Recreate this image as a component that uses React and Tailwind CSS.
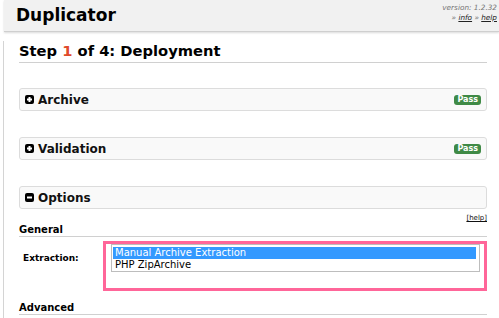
const font = { fontFamily: '"DejaVu Sans", Verdana, sans-serif' };

function Toggle({ open }) {
  return (
    <span className="inline-flex h-[9px] w-[9px] items-center justify-center rounded-[2px] bg-black">
      <svg width="7" height="7" viewBox="0 0 7 7">
        <rect x="1" y="2.5" width="5" height="2" fill="#fff" />
        {!open && <rect x="2.5" y="1" width="2" height="5" fill="#fff" />}
      </svg>
    </span>
  );
}

function Panel({ title, pass, open }) {
  return (
    <div className="flex h-[23px] items-center justify-between rounded-[3px] border border-[#dcdcdc] bg-[#f9f9f9] pl-[5px] pr-[5px]">
      <div className="flex items-center gap-[4px]">
        <Toggle open={open} />
        <span className="text-[12px] font-bold leading-[14px] text-[#111]">{title}</span>
      </div>
      {pass && (
        <span className="rounded-[3px] bg-[#3f8a46] px-[3px] py-[1px] text-[8px] font-bold leading-[8px] text-white">
          Pass
        </span>
      )}
    </div>
  );
}

export default function App() {
  return (
    <div className="h-[318px] w-[499px] overflow-hidden bg-white" style={font}>
      <div className="ml-[4px] flex h-[32px] items-start justify-between border-b border-[#cfcfcf] bg-[#f1f1f1] pl-[12px] pr-[2px] shadow-[0_1px_2px_rgba(0,0,0,0.15)]">
        <h1 className="mt-[4px] text-[17px] font-bold leading-[22px] text-black">Duplicator</h1>
        <div className="mt-[3px] text-right text-[7.3px] italic leading-[10px] text-[#777]">
          <div>version: 1.2.32</div>
          <div>
            » <span className="text-[#222] underline">info</span> » <span className="text-[#222] underline">help</span>
          </div>
        </div>
      </div>
      <div className="ml-[3px] h-[286px] border-l border-[#d4d4d4] pl-[15px] pr-[12px]">
        <div className="mt-[9px] border-b border-[#d0d0d0] pb-[1px] text-[14.7px] font-bold leading-[20px] text-black">
          Step <span className="text-[#e04b2b]">1</span> of 4: Deployment
        </div>
        <div className="mt-[25px]">
          <Panel title="Archive" pass />
        </div>
        <div className="mt-[26px]">
          <Panel title="Validation" pass />
        </div>
        <div className="mt-[26px]">
          <Panel title="Options" open />
        </div>
        <div className="mt-[5px] text-right text-[7px] leading-[8px] text-[#111] underline">[help]</div>
        <div className="mt-[1px] border-b border-[#d0d0d0] text-[10px] font-bold leading-[13px] text-black">
          General
        </div>
        <div className="mt-[4px] flex items-start">
          <div className="mt-[11px] w-[84px] pl-[4px] text-[9px] font-bold leading-[13px] text-black">Extraction:</div>
          <div className="h-[50px] flex-1 border-[3px] border-[#ff6699] pl-[5px] pr-[4px]">
            <div className="h-[28px] border border-[#bdbdbd] bg-white py-[2px] pl-[1px] pr-[3px] text-[10px] leading-[11.5px] text-black">
              <div className="bg-[#3399ff] px-[2px] text-white">Manual Archive Extraction</div>
              <div className="px-[2px]">PHP ZipArchive</div>
            </div>
          </div>
        </div>
        <div className="mt-[10px] border-b border-[#d0d0d0] text-[10px] font-bold leading-[13px] text-black">
          Advanced
        </div>
      </div>
    </div>
  );
}
